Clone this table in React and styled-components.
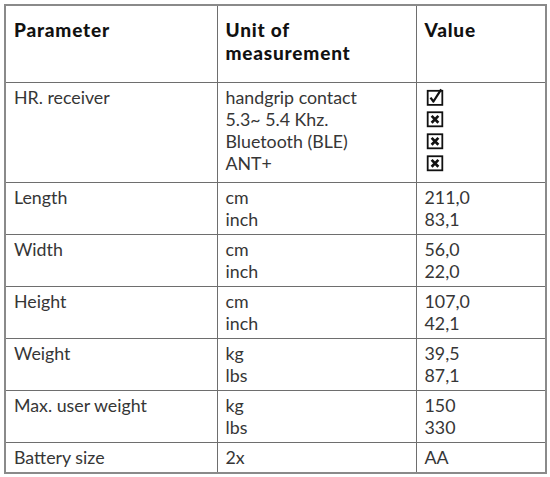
import React from "react";
import styled, { createGlobalStyle } from "styled-components";

const Global = createGlobalStyle`
  html, body { margin: 0; padding: 0; background: #ffffff; }
  body { font-family: Lato, "Noto Sans", sans-serif; }
`;

const Page = styled.div`
  padding: 4px 0 0 4px;
  width: 550px;
  height: 477px;
  box-sizing: border-box;
  background: #fff;
`;

const Table = styled.table`
  border-collapse: collapse;
  width: 541px;
  table-layout: fixed;
  border: 2px solid #8a8a8a;
  font-size: 17.8px;
  color: #363636;
`;

const Col = styled.col`
  width: ${(p) => p.$w}px;
`;

const Head = styled.th`
  text-align: left;
  vertical-align: top;
  font-size: 19px;
  font-weight: 900;
  letter-spacing: 0.8px;
  color: #111;
  line-height: 23px;
  padding: 12px 8px 18px 8px;
  border: 1px solid #6e6e6e;
`;

const Cell = styled.td`
  vertical-align: top;
  line-height: 22px;
  padding: ${(p) => (p.$tall ? "3px 8px 8px 8px" : "3px 8px 4px 8px")};
  border: 1px solid #6e6e6e;
`;

const Line = styled.div`
  display: flex;
  align-items: center;
  height: 22px;
  white-space: nowrap;
`;

const BoxIcon = styled.svg`
  width: 18px;
  height: 18px;
  margin-left: 1px;
  display: block;
`;

function Checked() {
  return (
    <BoxIcon viewBox="0 0 16 16">
      <rect x="1.5" y="2.5" width="13" height="12.5" fill="none" stroke="#111" strokeWidth="1.6" />
      <path d="M4 8.6 L6.6 12 L13.5 1.2" fill="none" stroke="#111" strokeWidth="2" strokeLinejoin="round" />
    </BoxIcon>
  );
}

function Crossed() {
  return (
    <BoxIcon viewBox="0 0 16 16">
      <rect x="1.5" y="2" width="13" height="12.5" fill="none" stroke="#111" strokeWidth="1.6" />
      <path d="M5 5.2 L11 11.3 M11 5.2 L5 11.3" fill="none" stroke="#111" strokeWidth="2.4" />
    </BoxIcon>
  );
}

const rows = [
  { p: "Length", u: ["cm", "inch"], v: ["211,0", "83,1"] },
  { p: "Width", u: ["cm", "inch"], v: ["56,0", "22,0"] },
  { p: "Height", u: ["cm", "inch"], v: ["107,0", "42,1"] },
  { p: "Weight", u: ["kg", "lbs"], v: ["39,5", "87,1"] },
  { p: "Max. user weight", u: ["kg", "lbs"], v: ["150", "330"] },
  { p: "Battery size", u: ["2x"], v: ["AA"] },
];

export default function App() {
  return (
    <Page>
      <Global />
      <Table>
        <colgroup>
          <Col $w={212} />
          <Col $w={199} />
          <Col $w={130} />
        </colgroup>
        <thead>
          <tr>
            <Head>Parameter</Head>
            <Head>
              Unit of
              <br />
              measurement
            </Head>
            <Head>Value</Head>
          </tr>
        </thead>
        <tbody>
          <tr>
            <Cell $tall>
              <Line>HR. receiver</Line>
            </Cell>
            <Cell $tall>
              <Line>handgrip contact</Line>
              <Line>5.3~ 5.4 Khz.</Line>
              <Line>Bluetooth (BLE)</Line>
              <Line>ANT+</Line>
            </Cell>
            <Cell $tall>
              <Line><Checked /></Line>
              <Line><Crossed /></Line>
              <Line><Crossed /></Line>
              <Line><Crossed /></Line>
            </Cell>
          </tr>
          {rows.map((r) => (
            <tr key={r.p}>
              <Cell>
                <Line>{r.p}</Line>
              </Cell>
              <Cell>
                {r.u.map((x) => (
                  <Line key={x}>{x}</Line>
                ))}
              </Cell>
              <Cell>
                {r.v.map((x) => (
                  <Line key={x}>{x}</Line>
                ))}
              </Cell>
            </tr>
          ))}
        </tbody>
      </Table>
    </Page>
  );
}
